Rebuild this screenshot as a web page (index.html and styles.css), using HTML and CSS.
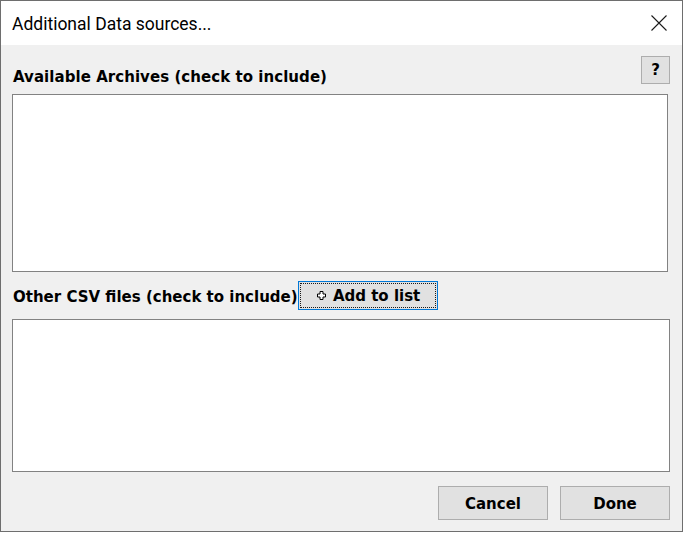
FILE: index.html
```html
<!DOCTYPE html>
<html lang="en">
<head>
<meta charset="utf-8">
<title>Additional Data sources...</title>
<link rel="stylesheet" href="styles.css">
</head>
<body>
<div class="window">
  <div class="titlebar">
    <span class="title">Additional Data sources...</span>
    <span class="close" aria-label="Close">
      <svg width="16" height="16" viewBox="0 0 16 16"><path d="M0.5 0.5 L15.5 15.5 M15.5 0.5 L0.5 15.5" stroke="#1a1a1a" stroke-width="1.1" fill="none"/></svg>
    </span>
  </div>
  <div class="content">
    <div class="head-row">
      <span class="label">Available Archives (check to include)</span>
      <button class="btn help">?</button>
    </div>
    <div class="list list-archives"></div>
    <div class="csv-row">
      <span class="label">Other CSV files (check to include)</span>
      <button class="btn add focus"><span class="plus">
        <svg width="9" height="9" viewBox="0 0 9 9"><path d="M3 0.5 H6 V3 H8.5 V6 H6 V8.5 H3 V6 H0.5 V3 H3 Z" fill="#fff" stroke="#000" stroke-width="1"/></svg>
      </span>Add to list</button>
    </div>
    <div class="list list-csv"></div>
    <div class="actions">
      <button class="btn action">Cancel</button>
      <button class="btn action">Done</button>
    </div>
  </div>
</div>
</body>
</html>
```

FILE: styles.css
```css
html, body {
  margin: 0;
  padding: 0;
  background: #ffffff;
}

.window {
  width: 683px;
  height: 532px;
  box-sizing: border-box;
  border: 1px solid #6e6e6e;
  background: #f0f0f0;
  display: flex;
  flex-direction: column;
}

.titlebar {
  height: 44px;
  background: #ffffff;
  display: flex;
  align-items: center;
  justify-content: space-between;
  padding: 0 15px 0 11px;
  flex: none;
}

.title {
  font-family: Roboto, "Noto Sans", sans-serif;
  font-size: 17.5px;
  color: #000;
  margin-top: 1px;
}

.close {
  display: flex;
  width: 16px;
  height: 16px;
}

.content {
  flex: 1;
  display: flex;
  flex-direction: column;
  padding: 12px 12px 0 11px;
}

.label {
  font-family: "DejaVu Sans", sans-serif;
  font-weight: bold;
  font-size: 15px;
  color: #000;
  white-space: nowrap;
}

.btn {
  font-family: "DejaVu Sans", sans-serif;
  font-weight: bold;
  font-size: 15px;
  color: #000;
  background: #e1e1e1;
  border: 1px solid #adadad;
  margin: 0;
  padding: 0;
  box-sizing: border-box;
}

.head-row {
  display: flex;
  align-items: flex-start;
  justify-content: space-between;
  height: 37px;
}

.head-row .label {
  margin-top: 11px;
  margin-left: 1px;
  letter-spacing: 0.05px;
}

.help {
  width: 29px;
  height: 28px;
  font-size: 15px;
  margin-top: -1px;
}

.list {
  background: #ffffff;
  border: 1px solid #828282;
  box-sizing: border-box;
}

.list-archives {
  height: 178px;
  margin-right: 2px;
}

.csv-row {
  display: flex;
  align-items: center;
  height: 47px;
}

.csv-row .label {
  margin-left: 1px;
  margin-top: 2px;
}

.add {
  height: 29px;
  width: 140px;
  display: flex;
  align-items: center;
  justify-content: center;
  gap: 7px;
  padding-left: 2px;
  padding-top: 1px;
}

.focus {
  border: 1px solid #0078d7;
  outline: 1px dotted #1a1a1a;
  outline-offset: -3px;
}

.plus {
  display: flex;
  margin-top: -2px;
}

.list-csv {
  height: 153px;
}

.actions {
  display: flex;
  justify-content: flex-end;
  gap: 12px;
  padding-top: 14px;
}

.action {
  width: 110px;
  height: 34px;
  padding-top: 1px;
}
```
